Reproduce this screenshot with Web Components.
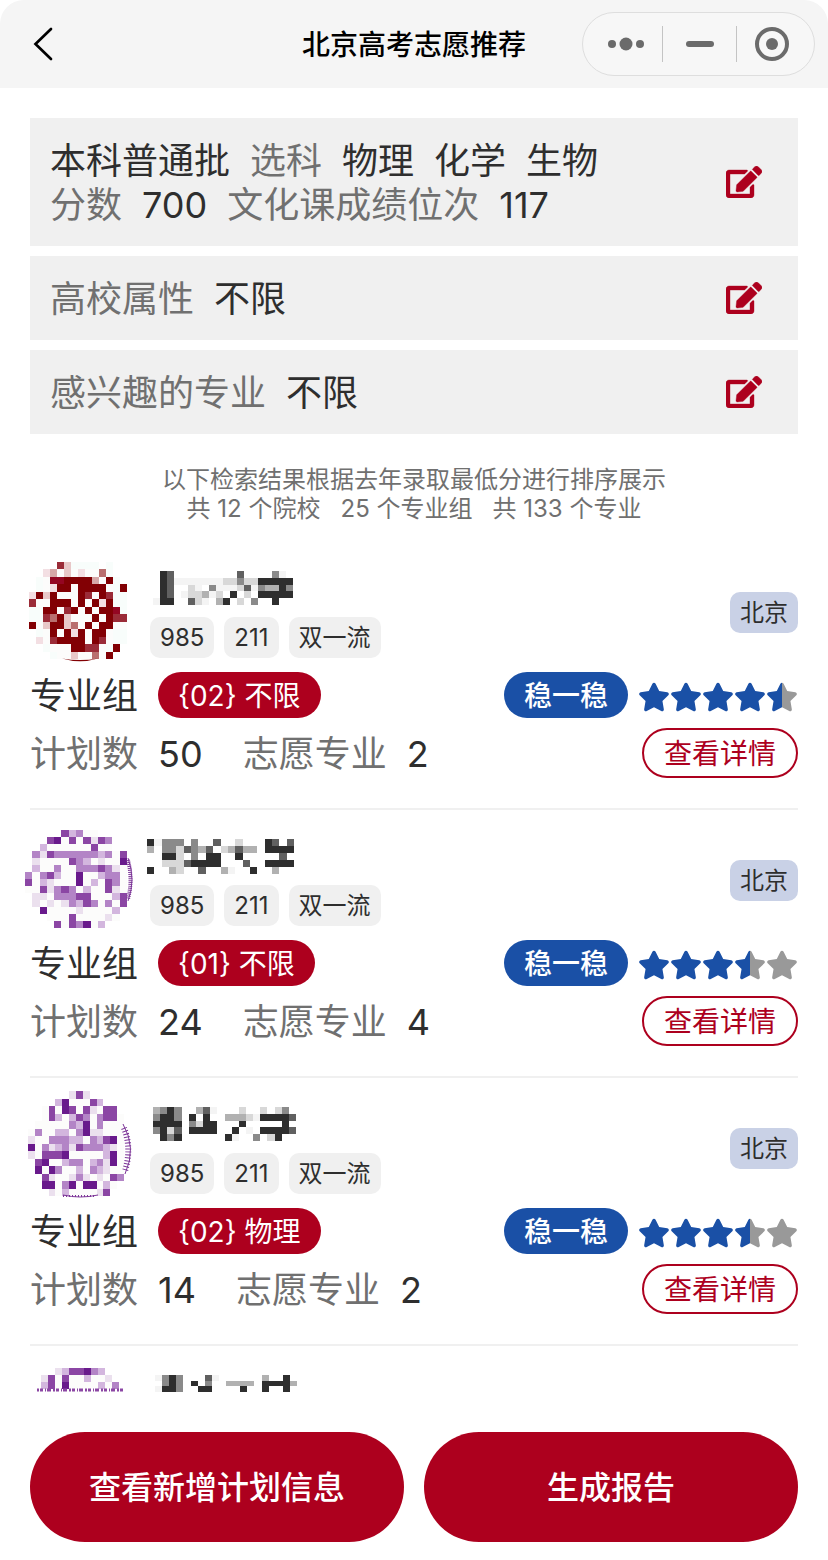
<!DOCTYPE html>
<html lang="zh-CN">
<head>
<meta charset="utf-8">
<meta name="viewport" content="width=device-width, initial-scale=1">
<title>北京高考志愿推荐</title>
<style>
  html, body { margin: 0; height: 100%; background: #fff; }
  body {
    --red: #ad001e; --blue: #1a50a6; --ink: #2e2e2e; --muted: #707070; --panel: #f0f0f0;
    font-family: Inter, "Noto Sans CJK SC", sans-serif; color: var(--ink);
  }
</style>
</head>
<body>
<volunteer-app></volunteer-app>
<script>
const define = (name, html, setup) => {
  const template = document.createElement('template');
  template.innerHTML = html;
  customElements.define(name, class extends HTMLElement {
    connectedCallback() {
      if (this.shadowRoot) return;
      this.attachShadow({ mode: 'open' }).append(template.content.cloneNode(true));
      if (setup) setup(this, this.shadowRoot);
    }
  });
};

/* Mosaic tiles: one letter per tile, "." leaves the tile empty. */
const PALETTE = {
  D: '#820004', A: '#940622', R: '#9b2c38', M: '#b96f6f', Q: '#d6a8a8', p: '#e8c8c8', i: '#f3dfe3', t: '#f8fdfb',
  P: '#691a8c', V: '#8b46a4', v: '#b384c6', n: '#d3b6de', e: '#ebe0ee', w: '#fcfcfb',
  K: '#2e2e2e', G: '#606060', g: '#8a8a8a', s: '#b1b1b1', l: '#d8d8d8', f: '#f4f4f4'
};
const MOSAICS = {
  crest1: { x: -1, y: 0, w: 98, h: 97, extra: '<path d="M32 96.500Q50 102 68 96.500Q50 99.500 32 96.500Z" fill="#820004"/>', rows: [
    '....Rpttttmt..',
    '..iQwpwiwwMt..',
    '.twAADDDDQwDt.',
    '.twiDDwDDDDwtD',
    'iDpDwwwDRwDRtt',
    'RwwDDDwDwDiDtt',
    'ttDDwRDwDwDDAt',
    'ttRMDpwwwDwDRR',
    'DwpDDpMwDwDDww',
    '.twDwDiDwDDwtt',
    '.iwRDDDDwDRwtt',
    '..twwwDDRRwtD.',
    '...twwpwwMwD..'] },
  crest2: { x: -5, y: 0, w: 102, h: 98, fringe: 'side', rows: [
    '.....Vnvww....',
    '...VPwVwVeVv..',
    '..nwwwwwwVww..',
    '.veVvvvvvvnvwV',
    '.ewwwwVvnwewwP',
    '.nwwvwwvvvVvew',
    'vwvVnwwPwwnvvw',
    'VwnewwwPwnwVvw',
    'wwVevVvwnwwVew',
    '.eewvvvVVwwwnV',
    '.ewewevnVvwvwV',
    '..Pwwwwewwwwn.',
    '...wwwVwwwwew.',
    '....VwVvPwn...'] },
  crest3: { x: -2, y: -7, w: 96, h: 105, fringe: 'full', rows: [
    '......eVe.....',
    '....nPwwwVn...',
    '..wVwPVwVewVV.',
    '..wVnwnVvwvVVw',
    '.wwwwwvnPwvwww',
    'wvwwnnwvPeewww',
    'ewwvvvnnwvnVPw',
    'PwvenveVvvvnew',
    'ewVVVPwwwwwnPw',
    '.VPwwnvvwnvePw',
    '.PwPvwwnwvneww',
    '..VewwevewewVv',
    '..PPwvPwPPwnw.',
    '...ewnwwwweV..'] },
  crest4: { x: 11, y: 2, w: 78, h: 21, fringe: 'line', rows: [
    '..enVVPvn..',
    'eVwVwwnwwe.',
    'nVwPwwwwnwv'] },
  name1: { x: 3, y: 9, w: 140, h: 34, rows: [
    '.KG.........G....gf.',
    '.KGfffffffllgllKKKKK',
    '.KG..lf.gffflGfgssKg',
    '.KG.fllsfl.K.l.KKKKK',
    'fKK..Glf.sK.l.g..K..'] },
  name2: { x: -3, y: 9, w: 147, h: 35, rows: [
    'Kfggg.g..G..l...KG.G',
    's.gglGgsG.lsGss.KKKK',
    '..KKl.g.KK..K.....G.',
    '..lllGKKKK...G..KKKK',
    'K..sl..G..sf..K..s..'] },
  name3: { x: 3, y: 9, w: 143, h: 34, rows: [
    'sgKg..sGf...l..l.lg.',
    'gKKg.K.K..ssslfKKKKG',
    'KKKK.glKK...K.....K.',
    'gKlG.KKKK..K.f.KKKKG',
    '.KgK......Kf..g.lK..'] },
  name4: { x: 5, y: 9, w: 142, h: 17, rows: [
    'fgKg...Gf......s..K.',
    '.gKg.K.g..ssss.KKKKs',
    'fKKg..KK....K..K..K.'] }
};
const FRINGE = {
  side: '<path d="M98 30Q103 50 98 69" fill="none" stroke="#7d3698" stroke-width="4" stroke-dasharray="1 1"/><path d="M98 28Q106 50 98 71" fill="none" stroke="#7d3698"/>',
  full: '<path d="M94 30Q102 50 95 73" fill="none" stroke="#7d3698" stroke-width="6" stroke-dasharray="1 2"/><path d="M93 26Q107 50 95 76M33 97Q50 101 68 97" fill="none" stroke="#7d3698"/><path d="M33 98H66" fill="none" stroke="#7d3698" stroke-width="2" stroke-dasharray="1 2"/>',
  line: '<path d="M7 24H94" fill="none" stroke="#8b46a4" stroke-width="3" stroke-dasharray="2 1 3 2 1 1 4 2"/>'
};
define('mosaic-tile', `
  <style>
    :host { display: block; flex: none; }
    svg { display: block; width: 100%; height: 100%; overflow: visible; }
  </style>
  <svg aria-hidden="true" shape-rendering="crispEdges"></svg>`, (host, root) => {
  const m = MOSAICS[host.getAttribute('pattern')];
  const cols = m.rows[0].length, cw = m.w / cols, ch = m.h / m.rows.length;
  let out = '';
  m.rows.forEach((row, r) => [...row].forEach((c, i) => {
    if (!PALETTE[c]) return;
    const x0 = Math.round(m.x + i * cw), x1 = Math.round(m.x + (i + 1) * cw);
    const y0 = Math.round(m.y + r * ch), y1 = Math.round(m.y + (r + 1) * ch);
    out += `<rect x="${x0}" y="${y0}" width="${x1 - x0}" height="${y1 - y0}" fill="${PALETTE[c]}"/>`;
  }));
  const over = (m.extra || '') + (FRINGE[m.fringe] || '');
  root.querySelector('svg').innerHTML = out + `<g shape-rendering="geometricPrecision">${over}</g>`;
});

define('nav-header', `
  <style>
    :host { display: grid; grid-template-columns: 1fr auto 1fr; align-items: center; flex: none;
      height: 88px; padding: 0 13px 0 24px; background: #f5f5f5; border-radius: 24px 24px 0 0; color: #000; }
    h1 { margin: 0; padding: 2px 11px 0 0; font-size: 28px; line-height: 40px; font-weight: 500; grid-column: 2; }
    button { border: 0; padding: 0; background: none; display: grid; place-items: center; height: 36px; }
    .back { width: 40px; height: 44px; }
    .capsule { justify-self: end; display: grid; grid-template-columns: 79px 74px 78px; align-items: center;
      height: 62px; border: 1px solid #dedede; border-radius: 32px; background: #f7f7f7; }
    .capsule button + button { border-left: 1px solid #c4c4c4; }
    svg { display: block; overflow: visible; }
  </style>
  <button class="back" aria-label="返回"><svg width="24" height="36" viewBox="0 0 24 36" fill="none" stroke="#000" stroke-width="2.700" stroke-linecap="round"><path d="M19 3 3.500 18 19 33"/></svg></button>
  <h1><slot></slot></h1>
  <div class="capsule">
    <button aria-label="更多"><svg width="40" height="36" viewBox="-10 0 40 36" fill="#6b6b6b"><circle cx="-1" cy="18" r="4"/><circle cx="13" cy="18" r="6.500"/><circle cx="27" cy="18" r="4"/></svg></button>
    <button aria-label="最小化"><svg width="28" height="6"><rect width="28" height="6" rx="3" fill="#6b6b6b"/></svg></button>
    <button aria-label="关闭"><svg width="36" height="36" viewBox="4 0 36 36"><circle cx="18" cy="18" r="15" fill="none" stroke="#6b6b6b" stroke-width="4"/><circle cx="18" cy="18" r="6" fill="#6b6b6b"/></svg></button>
  </div>`);

define('filter-card', `
  <style>
    :host { display: flex; align-items: center; justify-content: space-between; padding: 20px 36px 20px 20px;
      background: var(--panel); font-size: 36px; line-height: 46px; }
    button { border: 0; padding: 0; background: none; color: var(--red); flex: none; }
    svg { display: block; }
    ::slotted(p) { margin: 0; display: flex; column-gap: 20px; height: 44px; }
  </style>
  <div><slot></slot></div>
  <button aria-label="编辑"><svg width="36" height="32" viewBox="0 0 576 512" fill="currentColor"><path d="M402.600 83.200l90.200 90.200c3.800 3.800 3.800 10 0 13.800L274.400 405.600l-92.800 10.300c-12.400 1.400-22.900-9.100-21.500-21.500l10.300-92.800L388.800 83.200c3.800-3.800 10-3.800 13.800 0zm162-22.900l-48.800-48.800c-15.200-15.200-39.900-15.200-55.200 0l-35.400 35.400c-3.800 3.800-3.800 10 0 13.800l90.200 90.200c3.800 3.800 10 3.800 13.800 0l35.400-35.400c15.200-15.300 15.200-40 0-55.200zM384 346.200V448H64V128h229.800c3.200 0 6.200-1.300 8.500-3.500l40-40c7.600-7.600 2.200-20.500-8.500-20.500H48C21.500 64 0 85.500 0 112v352c0 26.500 21.500 48 48 48h352c26.500 0 48-21.500 48-48V306.200c0-10.700-12.900-16-20.500-8.500l-40 40c-2.200 2.300-3.500 5.300-3.500 8.500z" stroke="currentColor" stroke-width="6"/></svg></button>`);

const STAR = 'M259.300 17.800L194 150.200 47.900 171.500c-26.200 3.800-36.700 36.100-17.700 54.600l105.700 103-25 145.500c-4.500 26.300 23.200 46 46.400 33.700L288 439.600l130.700 68.700c23.200 12.200 50.900-7.400 46.400-33.700l-25-145.500 105.700-103c19-18.500 8.500-50.800-17.700-54.600L382 150.200 316.700 17.800c-11.700-23.600-45.600-23.900-57.400 0z';
define('star-rating', `
  <style>
    :host { display: flex; padding-top: 4px; }
    svg { display: block; }
  </style>`, (host, root) => {
  const value = Number(host.getAttribute('value'));
  host.setAttribute('role', 'img');
  host.setAttribute('aria-label', value + ' / 5');
  for (let i = 0; i < 5; i++) {
    const fill = Math.max(0, Math.min(1, value - i));
    root.innerHTML += `<svg width="32" height="30" viewBox="0 0 576 512"><defs><linearGradient id="s${i}"><stop offset="${fill}" stop-color="#1a50a6"/><stop offset="${fill}" stop-color="#999"/></linearGradient></defs><path d="${STAR}" fill="url(#s${i})"/></svg>`;
  }
});

define('soft-tag', `
  <style>
    :host { display: block; padding: 0 10px; border-radius: 10px; font-size: 24px; line-height: 42px; height: 41px;
      background: var(--tag, var(--panel)); white-space: nowrap; }
  </style><slot></slot>`);

define('pill-label', `
  <style>
    :host { display: block; padding: 0 20px; border-radius: 23px; font-size: 28px; line-height: 48px; height: 46px;
      color: #fff; background: var(--pill, var(--red)); white-space: nowrap; }
  </style><slot></slot>`);

define('school-item', `
  <style>
    :host { display: flex; flex-direction: column; gap: 10px; padding: 20px 0 30px; border-bottom: 2px solid #f0f0f0; }
    :host([first]) { padding-top: 0; }
    :host([partial]) { border: 0; }
    .head, .group, .plan, .tags { display: flex; }
    .head { gap: 20px; height: 100px; }
    .logo { width: 100px; height: 100px; }
    .info { flex: 1; }
    .name { width: 150px; height: 55px; }
    .tags { gap: 10px; }
    .city { --tag: #c9d1e6; align-self: center; }
    .group, .plan { align-items: center; font-size: 36px; line-height: 46px; }
    .group span, .plan span, .plan b { padding-top: 2px; }
    .group { height: 46px; }
    .group pill-label { margin-left: 20px; }
    .group .chance { --pill: var(--blue); font-weight: 500; margin: 0 10px 0 auto; }
    .plan { height: 50px; gap: 20px; color: var(--muted); }
    .plan b { font-weight: 400; color: var(--ink); }
    .plan b:first-of-type { margin-right: 20px; }
    button { margin-left: auto; padding: 2px 20px 0; height: 50px; border: 2px solid var(--red); border-radius: 25px;
      background: #fff; color: var(--red); font: 400 28px/44px Inter, "Noto Sans CJK SC", sans-serif; }
  </style>`, (host, root) => {
  const get = (name) => host.getAttribute(name);
  const full = !host.hasAttribute('partial');
  const body = document.createElement('template');
  body.innerHTML = `
    <div class="head">
      <mosaic-tile class="logo" pattern="crest${get('n')}"></mosaic-tile>
      <div class="info">
        <mosaic-tile class="name" pattern="name${get('n')}"></mosaic-tile>
        ${full ? '<div class="tags"><soft-tag>985</soft-tag><soft-tag>211</soft-tag><soft-tag>双一流</soft-tag></div>' : ''}
      </div>
      ${full ? '<soft-tag class="city">北京</soft-tag>' : ''}
    </div>` + (full ? `
    <div class="group"><span>专业组</span><pill-label>${get('group')}</pill-label>
      <pill-label class="chance">稳一稳</pill-label><star-rating value="${get('stars')}"></star-rating></div>
    <div class="plan"><span>计划数</span><b>${get('plan')}</b><span>志愿专业</span><b>${get('majors')}</b>
      <button>查看详情</button></div>` : '');
  root.append(body.content);
});

define('action-bar', `
  <style>
    :host { display: grid; grid-template-columns: 1fr 1fr; gap: 20px; flex: none; padding: 40px 30px 18px; background: #fff; }
    ::slotted(button) { height: 110px; padding: 2px 0 0; border: 0; border-radius: 55px; background: var(--red); color: #fff;
      font: 500 32px/44px Inter, "Noto Sans CJK SC", sans-serif; }
  </style><slot></slot>`);

define('volunteer-app', `
  <style>
    :host { display: flex; flex-direction: column; height: 100vh; }
    main { flex: 1; min-height: 0; overflow: hidden; padding: 30px 30px 0; }
    .filters { display: grid; gap: 10px; }
    .filters span { color: var(--muted); }
    .filters b { font-weight: 400; }
    .note { margin: 30px 0 40px; font-size: 24px; line-height: 31px; color: var(--muted); text-align: center; }
    .note p { margin: 0; height: 29px; display: flex; justify-content: center; gap: 20px; }
  </style>
  <nav-header>北京高考志愿推荐</nav-header>
  <main>
    <div class="filters">
      <filter-card>
        <p><b>本科普通批</b><span>选科</span><b>物理</b><b>化学</b><b>生物</b></p>
        <p><span>分数</span><b>700</b><span>文化课成绩位次</span><b>117</b></p>
      </filter-card>
      <filter-card><p><span>高校属性</span><b>不限</b></p></filter-card>
      <filter-card><p><span>感兴趣的专业</span><b>不限</b></p></filter-card>
    </div>
    <div class="note">
      <p>以下检索结果根据去年录取最低分进行排序展示</p>
      <p><span>共 12 个院校</span><span>25 个专业组</span><span>共 133 个专业</span></p>
    </div>
    <school-item first n="1" group="{02} 不限" stars="4.5" plan="50" majors="2"></school-item>
    <school-item n="2" group="{01} 不限" stars="3.5" plan="24" majors="4"></school-item>
    <school-item n="3" group="{02} 物理" stars="3.5" plan="14" majors="2"></school-item>
    <school-item partial n="4"></school-item>
  </main>
  <action-bar>
    <button>查看新增计划信息</button>
    <button>生成报告</button>
  </action-bar>`);
</script>
</body>
</html>
